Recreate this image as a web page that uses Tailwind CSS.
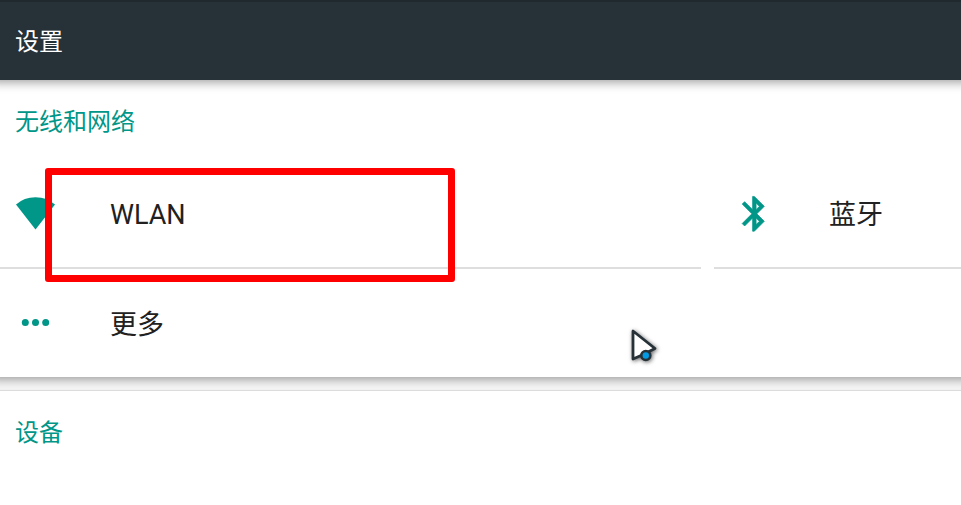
<!DOCTYPE html>
<html lang="zh-CN">
<head>
<meta charset="utf-8">
<meta name="viewport" content="width=device-width, initial-scale=1">
<title>设置</title>
<script src="https://cdn.jsdelivr.net/npm/@tailwindcss/browser@4"></script>
</head>
<body class="relative flex min-h-screen flex-col overflow-x-hidden bg-[#f6f6f6] font-[Roboto,'Noto_Sans_CJK_SC',sans-serif] text-[#212121]">
  <header class="relative z-10 flex h-20 items-center border-t-2 border-[#20292e] bg-[#273238] px-[15px] pt-[2px] shadow-[0_-8px_10px_10px_rgba(0,0,0,0.4)]">
    <h1 class="text-2xl text-white">设置</h1>
  </header>
  <main class="flex grow flex-col gap-[14px]">
    <section class="bg-white shadow-[0_-8px_10px_10px_rgba(0,0,0,0.4)]">
      <h2 class="flex h-20 items-center px-[15px] pt-1 text-2xl text-[#009688]">无线和网络</h2>
      <div class="grid grid-cols-[701fr_247fr] gap-x-[13px]">
        <a href="#wlan" class="relative flex h-[109px] items-center gap-[55px] border-b-2 border-[#dedede] pl-[15px] text-[27px]">
          <svg class="size-10 shrink-0" viewBox="0 0 40 40" fill="#009688" aria-hidden="true"><path d="M1 10.500Q9 3.200 20.500 3.200T40 10.500L20.500 35.500Z"/></svg>
          <span class="pt-1">WLAN</span>
          <span class="pointer-events-none absolute top-2 left-[45px] h-[114px] w-[410px] rounded-[3px] border-7 border-[#ff0000]"></span>
        </a>
        <a href="#bluetooth" class="flex h-[109px] items-center gap-[55px] border-b-2 border-[#dedede] pl-5 text-[27px]">
          <svg class="size-10 shrink-0" viewBox="0.3 0.6 23 23" fill="#009688" stroke="#009688" stroke-width="0.400" aria-hidden="true"><path d="M17.710 7.710 12 2h-1v7.590L6.410 5 5 6.410 10.590 12 5 17.590 6.410 19 11 14.410V22h1l5.710-5.710L13.410 12l4.300-4.290zM13 5.830l1.880 1.880L13 9.590V5.830zm1.880 10.460L13 18.170v-3.760l1.880 1.880z"/></svg>
          <span class="pt-1 whitespace-nowrap">蓝牙</span>
        </a>
        <a href="#more" class="flex h-[108px] items-center gap-[55px] pl-[15px] text-[27px]">
          <svg class="size-10 shrink-0" viewBox="0 0 40 40" fill="#009688" aria-hidden="true"><circle cx="10.300" cy="19.500" r="3.500"/><circle cx="20.500" cy="19.500" r="3.500"/><circle cx="30.700" cy="19.500" r="3.500"/></svg>
          <span class="pt-1">更多</span>
        </a>
      </div>
    </section>
    <section class="grow bg-white shadow-[0_-1px_1px_rgba(0,0,0,0.1)]">
      <h2 class="flex h-20 items-center px-[15px] pt-1 text-2xl text-[#009688]">设备</h2>
    </section>
  </main>
  <svg class="pointer-events-none absolute top-[324px] left-[624px] z-20 h-11 w-10 drop-shadow-[1px_1px_2px_rgba(0,0,0,0.6)]" viewBox="0 0 40 44" aria-hidden="true">
    <path d="M9 7V35L17 31.500 31 24.500Z" fill="#fff" stroke="#263238" stroke-width="2.800" stroke-linejoin="round"/>
    <circle cx="21.800" cy="31.500" r="4.500" fill="#039be5" stroke="#263238" stroke-width="2.600"/>
  </svg>
</body>
</html>
